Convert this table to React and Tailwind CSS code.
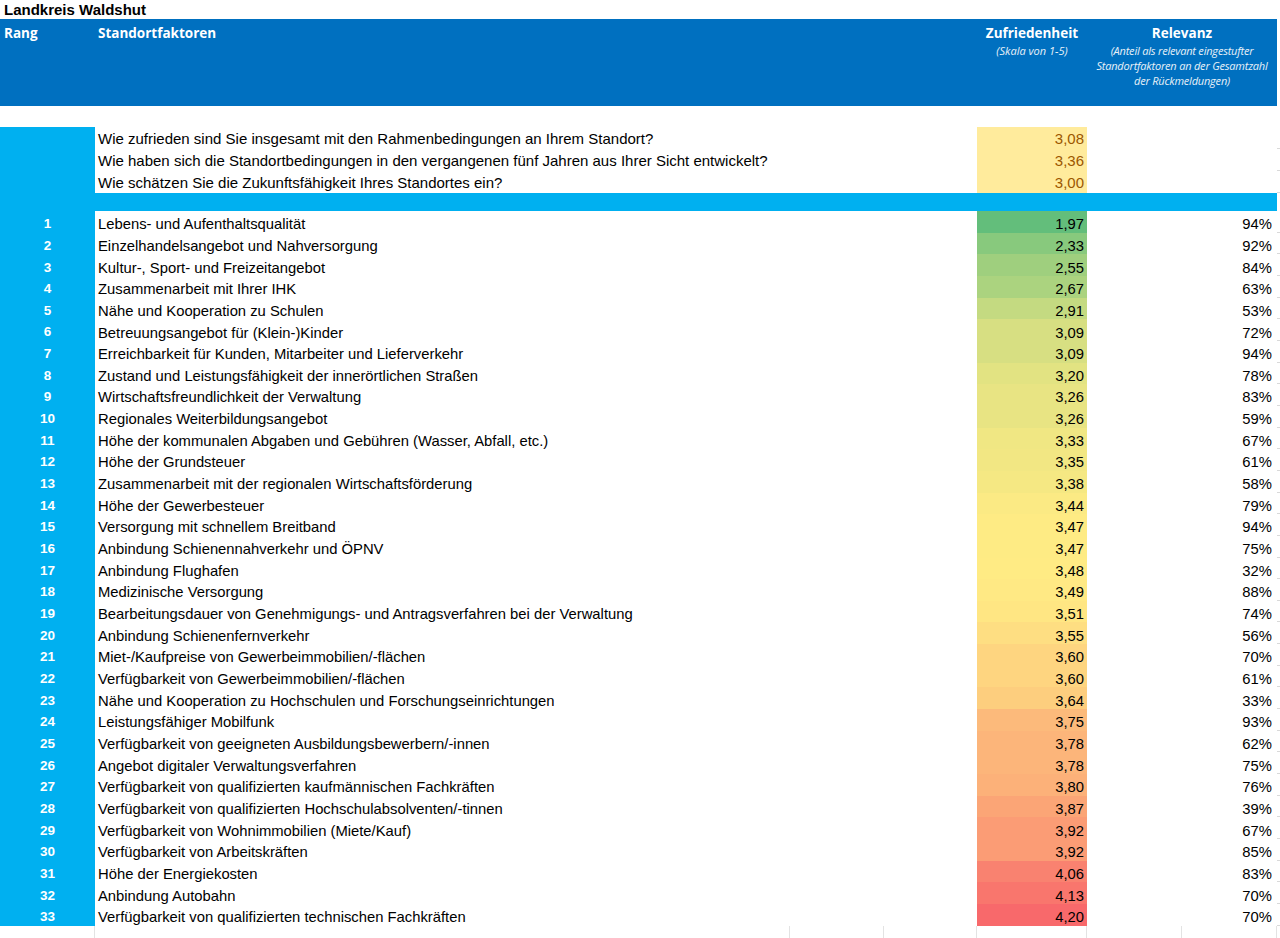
const questions = [
  ["Wie zufrieden sind Sie insgesamt mit den Rahmenbedingungen an Ihrem Standort?", 3.08],
  ["Wie haben sich die Standortbedingungen in den vergangenen fünf Jahren aus Ihrer Sicht entwickelt?", 3.36],
  ["Wie schätzen Sie die Zukunftsfähigkeit Ihres Standortes ein?", 3.0],
];

const factors = [
  ["Lebens- und Aufenthaltsqualität", 1.97, 94],
  ["Einzelhandelsangebot und Nahversorgung", 2.33, 92],
  ["Kultur-, Sport- und Freizeitangebot", 2.55, 84],
  ["Zusammenarbeit mit Ihrer IHK", 2.67, 63],
  ["Nähe und Kooperation zu Schulen", 2.91, 53],
  ["Betreuungsangebot für (Klein-)Kinder", 3.09, 72],
  ["Erreichbarkeit für Kunden, Mitarbeiter und Lieferverkehr", 3.09, 94],
  ["Zustand und Leistungsfähigkeit der innerörtlichen Straßen", 3.2, 78],
  ["Wirtschaftsfreundlichkeit der Verwaltung", 3.26, 83],
  ["Regionales Weiterbildungsangebot", 3.26, 59],
  ["Höhe der kommunalen Abgaben und Gebühren (Wasser, Abfall, etc.)", 3.33, 67],
  ["Höhe der Grundsteuer", 3.35, 61],
  ["Zusammenarbeit mit der regionalen Wirtschaftsförderung", 3.38, 58],
  ["Höhe der Gewerbesteuer", 3.44, 79],
  ["Versorgung mit schnellem Breitband", 3.47, 94],
  ["Anbindung Schienennahverkehr und ÖPNV", 3.47, 75],
  ["Anbindung Flughafen", 3.48, 32],
  ["Medizinische Versorgung", 3.49, 88],
  ["Bearbeitungsdauer von Genehmigungs- und Antragsverfahren bei der Verwaltung", 3.51, 74],
  ["Anbindung Schienenfernverkehr", 3.55, 56],
  ["Miet-/Kaufpreise von Gewerbeimmobilien/-flächen", 3.6, 70],
  ["Verfügbarkeit von Gewerbeimmobilien/-flächen", 3.6, 61],
  ["Nähe und Kooperation zu Hochschulen und Forschungseinrichtungen", 3.64, 33],
  ["Leistungsfähiger Mobilfunk", 3.75, 93],
  ["Verfügbarkeit von geeigneten Ausbildungsbewerbern/-innen", 3.78, 62],
  ["Angebot digitaler Verwaltungsverfahren", 3.78, 75],
  ["Verfügbarkeit von qualifizierten kaufmännischen Fachkräften", 3.8, 76],
  ["Verfügbarkeit von qualifizierten Hochschulabsolventen/-tinnen", 3.87, 39],
  ["Verfügbarkeit von Wohnimmobilien (Miete/Kauf)", 3.92, 67],
  ["Verfügbarkeit von Arbeitskräften", 3.92, 85],
  ["Höhe der Energiekosten", 4.06, 83],
  ["Anbindung Autobahn", 4.13, 70],
  ["Verfügbarkeit von qualifizierten technischen Fachkräften", 4.2, 70],
];

// excel-style 3 colour scale: green -> yellow (median) -> red
const values = factors.map((f) => f[1]);
const minV = Math.min(...values);
const maxV = Math.max(...values);
const midV = [...values].sort((a, b) => a - b)[Math.floor(values.length / 2)];

const mix = (a, b, t) => a.map((c, i) => Math.round(c + (b[i] - c) * t));
const scaleColor = (v) => {
  const green = [99, 190, 123];
  const yellow = [255, 235, 132];
  const red = [248, 105, 107];
  const rgb =
    v <= midV
      ? mix(green, yellow, (v - minV) / (midV - minV))
      : mix(yellow, red, (v - midV) / (maxV - midV));
  return `rgb(${rgb.join(",")})`;
};

const fmt = (v) => v.toFixed(2).replace(".", ",");

export default function App() {
  return (
    <div className="w-[1280px] h-[938px] bg-white overflow-hidden font-['Liberation_Sans',Arial,sans-serif] text-black">
      {/* title */}
      <div className="h-[19px] pl-[4px] text-[15px] font-bold leading-[19px]">Landkreis Waldshut</div>

      {/* header */}
      <div className="flex h-[87px] w-[1277px] bg-[#0070C0] text-white font-['Open_Sans',sans-serif]">
        <div className="w-[95px] pl-[4px] pt-[4px] text-[13.5px] font-bold">Rang</div>
        <div className="flex-1 pl-[3px] pt-[4px] text-[13.5px] font-bold">Standortfaktoren</div>
        <div className="w-[110px] pt-[4px] flex flex-col items-center">
          <div className="text-[13.5px] font-bold">Zufriedenheit</div>
          <div className="text-[11px] italic leading-[15px] text-[#e8f0f8]">(Skala von 1-5)</div>
        </div>
        <div className="w-[190px] pt-[4px] flex flex-col items-center text-center">
          <div className="text-[13.5px] font-bold">Relevanz</div>
          <div className="text-[11px] italic leading-[15px] text-[#e8f0f8] tracking-[-0.2px]">
            (Anteil als relevant eingestufter
            <br />
            Standortfaktoren an der Gesamtzahl
            <br />
            der Rückmeldungen)
          </div>
        </div>
      </div>

      <div className="h-[21px]" />

      {/* general questions */}
      {questions.map(([q, v]) => (
        <div key={q} className="flex h-[22px] text-[15px]">
          <div className="w-[95px] bg-[#00B0F0]" />
          <div className="flex-1 pl-[3px] flex items-center pt-[2px]">{q}</div>
          <div className="w-[110px] bg-[#FFEB9C] text-[#9C5700] flex items-center justify-end pr-[3px] pt-[2px]">
            {fmt(v)}
          </div>
          <div className="w-[190px]" />
          <div className="w-[3px] border-b border-[#d9d9d9]" />
        </div>
      ))}

      {/* separator */}
      <div className="h-[18px] w-[1277px] bg-[#00B0F0]" />

      {/* ranking */}
      {factors.map(([name, v, rel], i) => (
        <div key={name} className="flex h-[21.67px] text-[14.8px]">
          <div className="w-[95px] bg-[#00B0F0] text-white font-bold text-[13.5px] flex items-center justify-center pt-[5px]">
            {i + 1}
          </div>
          <div className="flex-1 pl-[3px] flex items-center pt-[5px]">{name}</div>
          <div
            className="w-[110px] flex items-center justify-end pr-[3px] pt-[5px]"
            style={{ backgroundColor: scaleColor(v) }}
          >
            {fmt(v)}
          </div>
          <div className="w-[190px] flex items-center justify-end pr-[5px] pt-[5px]">{rel}%</div>
          <div className="w-[3px] border-b border-[#d9d9d9]" />
        </div>
      ))}

      {/* empty grid row */}
      <div className="flex h-[12px]">
        <div className="w-[95px] border-r border-[#e3e3e3]" />
        <div className="w-[695px] border-r border-[#e3e3e3]" />
        <div className="w-[94px] border-r border-[#e3e3e3]" />
        <div className="w-[93px] border-r border-[#e3e3e3]" />
        <div className="w-[110px] border-r border-[#e3e3e3]" />
        <div className="w-[95px] border-r border-[#e3e3e3]" />
        <div className="w-[95px] border-r border-[#e3e3e3]" />
      </div>
    </div>
  );
}
